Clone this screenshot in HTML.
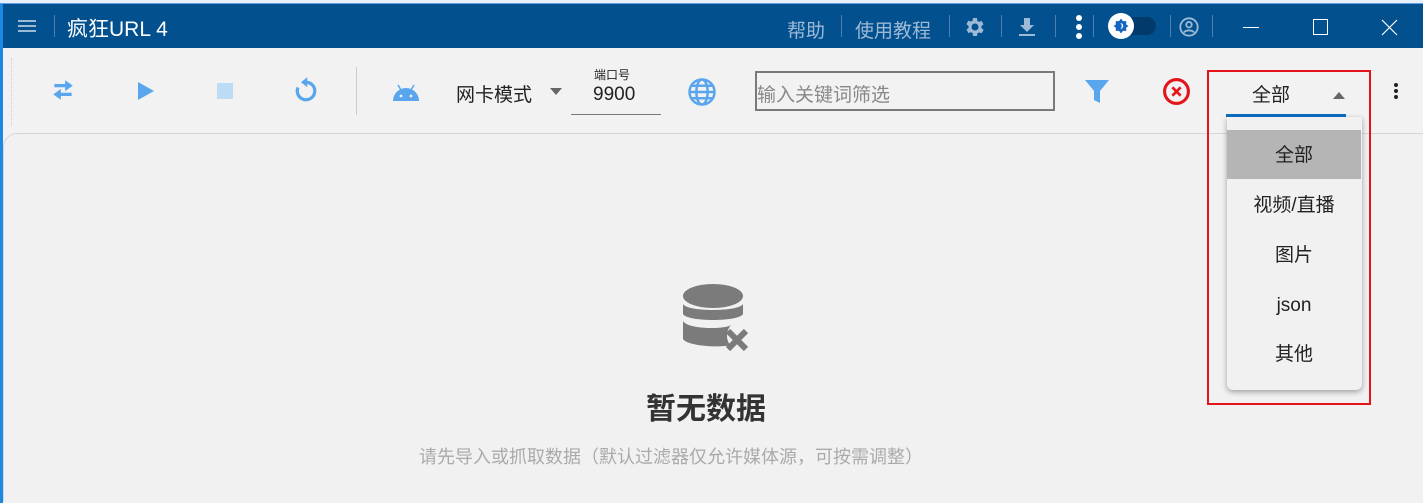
<!DOCTYPE html>
<html><head><meta charset="utf-8"><style>
*{margin:0;padding:0;box-sizing:border-box}
html,body{width:1423px;height:503px;overflow:hidden}
body{background:#f2f2f2;font-family:"Liberation Sans","Noto Sans CJK SC",sans-serif;position:relative}
.abs{position:absolute}
.top{left:0;top:0;width:1423px;height:4px;background:#e8f1fb;border-bottom:1px solid #5aa0e6}
.bar{left:0;top:4px;width:1423px;height:44px;background:#03508f}
.lb{left:0;top:4px;width:3px;height:499px;background:#1e88e5}
.t{color:#fff}
.mt{color:#9cb9d6;font-size:19px}
.sep{width:1px;height:22px;background:#4f7fae;top:15px}
.panel{left:3px;top:133px;width:1440px;height:368px;border:1px solid #d6d6d6;border-bottom:none;border-radius:14px 14px 0 0;background:#f1f1f1}
.ic{fill:#5aa6ee}
</style></head><body>
<div class="abs top"></div>
<div class="abs bar"></div>
<div class="abs lb"></div>
<div class="abs" style="left:18px;top:20px;width:18px;height:2px;background:#9cb9d6;box-shadow:0 5px 0 #9cb9d6,0 10px 0 #9cb9d6"></div>
<div class="abs sep" style="left:54px"></div>
<div class="abs t" style="left:67px;top:13px;font-size:21px">疯狂URL 4</div>
<div class="abs mt" style="left:787px;top:16px">帮助</div>
<div class="abs sep" style="left:841px"></div>
<div class="abs mt" style="left:855px;top:16px">使用教程</div>
<div class="abs sep" style="left:949px"></div>
<svg class="abs" style="left:962px;top:15px" width="24" height="24" viewBox="0 0 24 24"><path fill="#9cb9d6" d="M19.4 13a7.5 7.5 0 0 0 0-2l2.1-1.6-2-3.5-2.5 1a7 7 0 0 0-1.7-1L15 3h-4l-.4 2.6a7 7 0 0 0-1.7 1l-2.5-1-2 3.5L6.6 11a7.5 7.5 0 0 0 0 2l-2.1 1.6 2 3.5 2.5-1a7 7 0 0 0 1.7 1L11 21h4l.4-2.6a7 7 0 0 0 1.7-1l2.5 1 2-3.5zM13 15.5a3.5 3.5 0 1 1 0-7 3.5 3.5 0 0 1 0 7z"/></svg>
<div class="abs sep" style="left:1001px"></div>
<svg class="abs" style="left:1017px;top:16px" width="20" height="22" viewBox="0 0 20 22"><path fill="#9cb9d6" d="M7 2h6v7h4l-7 7-7-7h4zM2 18h16v2H2z"/></svg>
<div class="abs sep" style="left:1055px"></div>
<div class="abs" style="left:1076px;top:15px;width:6px;height:6px;border-radius:3px;background:#fff;box-shadow:0 9px 0 #fff,0 18px 0 #fff"></div>
<div class="abs sep" style="left:1093px"></div>
<div class="abs" style="left:1112px;top:17px;width:44px;height:18px;border-radius:9px;background:#023a6b"></div>
<div class="abs" style="left:1108px;top:13px;width:26px;height:26px;border-radius:13px;background:#fff"></div>
<svg class="abs" style="left:1112px;top:17px" width="18" height="18" viewBox="0 0 24 24"><path fill="#1565c0" d="M12 2l2.5 3.5H19v4.5L22 12l-3 2v4.5h-4.5L12 22l-2.5-3.5H5V14l-3-2 3-2V5.5h4.5z"/><path fill="#fff" d="M11 8a4 4 0 0 1 0 8 5 5 0 0 0 0-8z"/></svg>
<div class="abs sep" style="left:1170px"></div>
<svg class="abs" style="left:1178px;top:16px" width="22" height="22" viewBox="0 0 24 24"><circle cx="12" cy="12" r="9.5" fill="none" stroke="#9cb9d6" stroke-width="2"/><circle cx="12" cy="9.5" r="3" fill="none" stroke="#9cb9d6" stroke-width="2"/><path d="M6.5 18c2-3 9-3 11 0" fill="none" stroke="#9cb9d6" stroke-width="2"/></svg>
<div class="abs sep" style="left:1212px"></div>
<div class="abs" style="left:1243px;top:27px;width:16px;height:1px;background:#fff"></div>
<div class="abs" style="left:1313px;top:19px;width:15px;height:16px;border:1px solid #fff"></div>
<svg class="abs" style="left:1381px;top:19px" width="17" height="17"><path d="M1 1L16 16M16 1L1 16" stroke="#fff" stroke-width="1.2"/></svg>
<div class="abs" style="left:11px;top:58px;width:1px;height:68px;border-left:1px dotted #ccc"></div>
<svg class="abs" style="left:50px;top:79px" width="26" height="22" viewBox="0 0 24 20"><path class="ic" d="M14 1l7 5-7 5V7.5H4v-3h10zM10 9l-7 5 7 5v-3.5h10v-3H10z"/></svg>
<svg class="abs" style="left:137px;top:81px" width="18" height="20"><path class="ic" d="M1 1L17 10L1 19z"/></svg>
<div class="abs" style="left:217px;top:83px;width:16px;height:16px;background:#bcdcf6"></div>
<svg class="abs" style="left:291px;top:76px" width="30" height="30" viewBox="0 0 24 24"><path d="M12 5a7 7 0 1 1-6.4 4.2" fill="none" stroke="#5aa6ee" stroke-width="2.6"/><path class="ic" d="M13 1v8L8 5z"/></svg>
<div class="abs" style="left:356px;top:67px;width:1px;height:48px;background:#ccc"></div>
<svg class="abs" style="left:392px;top:82px" width="28" height="20" viewBox="0 0 28 20"><path class="ic" d="M1 19A13 13 0 0 1 27 19z"/><path d="M6 3l3 5M22 3l-3 5" stroke="#5aa6ee" stroke-width="1.5"/><circle cx="9" cy="14" r="1.4" fill="#f2f2f2"/><circle cx="19" cy="14" r="1.4" fill="#f2f2f2"/></svg>
<div class="abs" style="left:456px;top:80px;font-size:19px;color:#222">网卡模式</div>
<svg class="abs" style="left:550px;top:88px" width="12" height="7"><path d="M0 0h12L6 7z" fill="#666"/></svg>
<div class="abs" style="left:594px;top:66px;font-size:12px;color:#222">端口号</div>
<div class="abs" style="left:593px;top:84px;font-size:19px;color:#222">9900</div>
<div class="abs" style="left:571px;top:114px;width:90px;height:1px;background:#777"></div>
<svg class="abs" style="left:687px;top:77px" width="30" height="30" viewBox="0 0 24 24"><circle cx="12" cy="12" r="10" fill="none" stroke="#5aa6ee" stroke-width="2"/><ellipse cx="12" cy="12" rx="4.5" ry="10" fill="none" stroke="#5aa6ee" stroke-width="2"/><path d="M2 12h20M4 7h16M4 17h16" stroke="#5aa6ee" stroke-width="2"/></svg>
<div class="abs" style="left:755px;top:71px;width:300px;height:40px;border:2px solid #7a7a7a;background:#f2f2f2"></div>
<div class="abs" style="left:757px;top:80px;font-size:19px;color:#888">输入关键词筛选</div>
<svg class="abs" style="left:1084px;top:79px" width="26" height="26" viewBox="0 0 26 26"><path class="ic" d="M1 1h24L16 12v12l-6-3v-9z"/></svg>
<svg class="abs" style="left:1162px;top:77px" width="29" height="29" viewBox="0 0 28 28"><circle cx="14" cy="14" r="11.5" fill="none" stroke="#e3151b" stroke-width="3"/><path d="M10 10l8 8M18 10l-8 8" stroke="#e3151b" stroke-width="2.6"/></svg>
<div class="abs" style="left:1252px;top:85px;font-size:19px;color:#222;line-height:22px">全部</div>
<svg class="abs" style="left:1333px;top:92px" width="12" height="7"><path d="M0 7h12L6 0z" fill="#666"/></svg>
<div class="abs" style="left:1226px;top:114px;width:120px;height:3px;background:#0a6fc2"></div>
<div class="abs" style="left:1394px;top:83px;width:4px;height:4px;border-radius:2px;background:#222;box-shadow:0 6px 0 #222,0 12px 0 #222"></div>
<div class="abs panel"></div>
<svg class="abs" style="left:682px;top:283px" width="72" height="72" viewBox="0 0 72 72"><ellipse cx="31" cy="13" rx="30" ry="12" fill="#7b7b7b"/><path d="M1 21c4 8 56 8 60 0v10c-4 8-56 8-60 0z" fill="#7b7b7b"/><path d="M1 38c4 8 40 9 48 4a16 16 0 0 0-1 20c-10 3-43 1-47-6z" fill="#7b7b7b"/><path d="M46 48l18 18M64 48L46 66" stroke="#7b7b7b" stroke-width="6"/></svg>
<div class="abs" style="left:646px;top:390px;font-size:30px;font-weight:bold;color:#333;line-height:40px">暂无数据</div>
<div class="abs" style="left:419px;top:444px;font-size:18px;color:#aaa;line-height:26px">请先导入或抓取数据（默认过滤器仅允许媒体源，可按需调整）</div>
<div class="abs" style="left:1227px;top:117px;width:135px;height:273px;background:#f1f1f1;border-radius:0 0 6px 6px;box-shadow:0 2px 6px rgba(0,0,0,.35)"></div>
<div class="abs" style="left:1227px;top:130px;width:134px;height:49px;background:#b5b5b5"></div>
<div class="abs" style="left:1227px;top:142px;width:134px;text-align:center;font-size:19px;color:#222;line-height:28px">全部<br><span style="display:block;height:22px"></span>视频/直播<br><span style="display:block;height:22px"></span>图片<br><span style="display:block;height:22px"></span>json<br><span style="display:block;height:21px"></span>其他</div>
<div class="abs" style="left:1207px;top:70px;width:164px;height:335px;border:2px solid #e3151b"></div>
</body></html>
